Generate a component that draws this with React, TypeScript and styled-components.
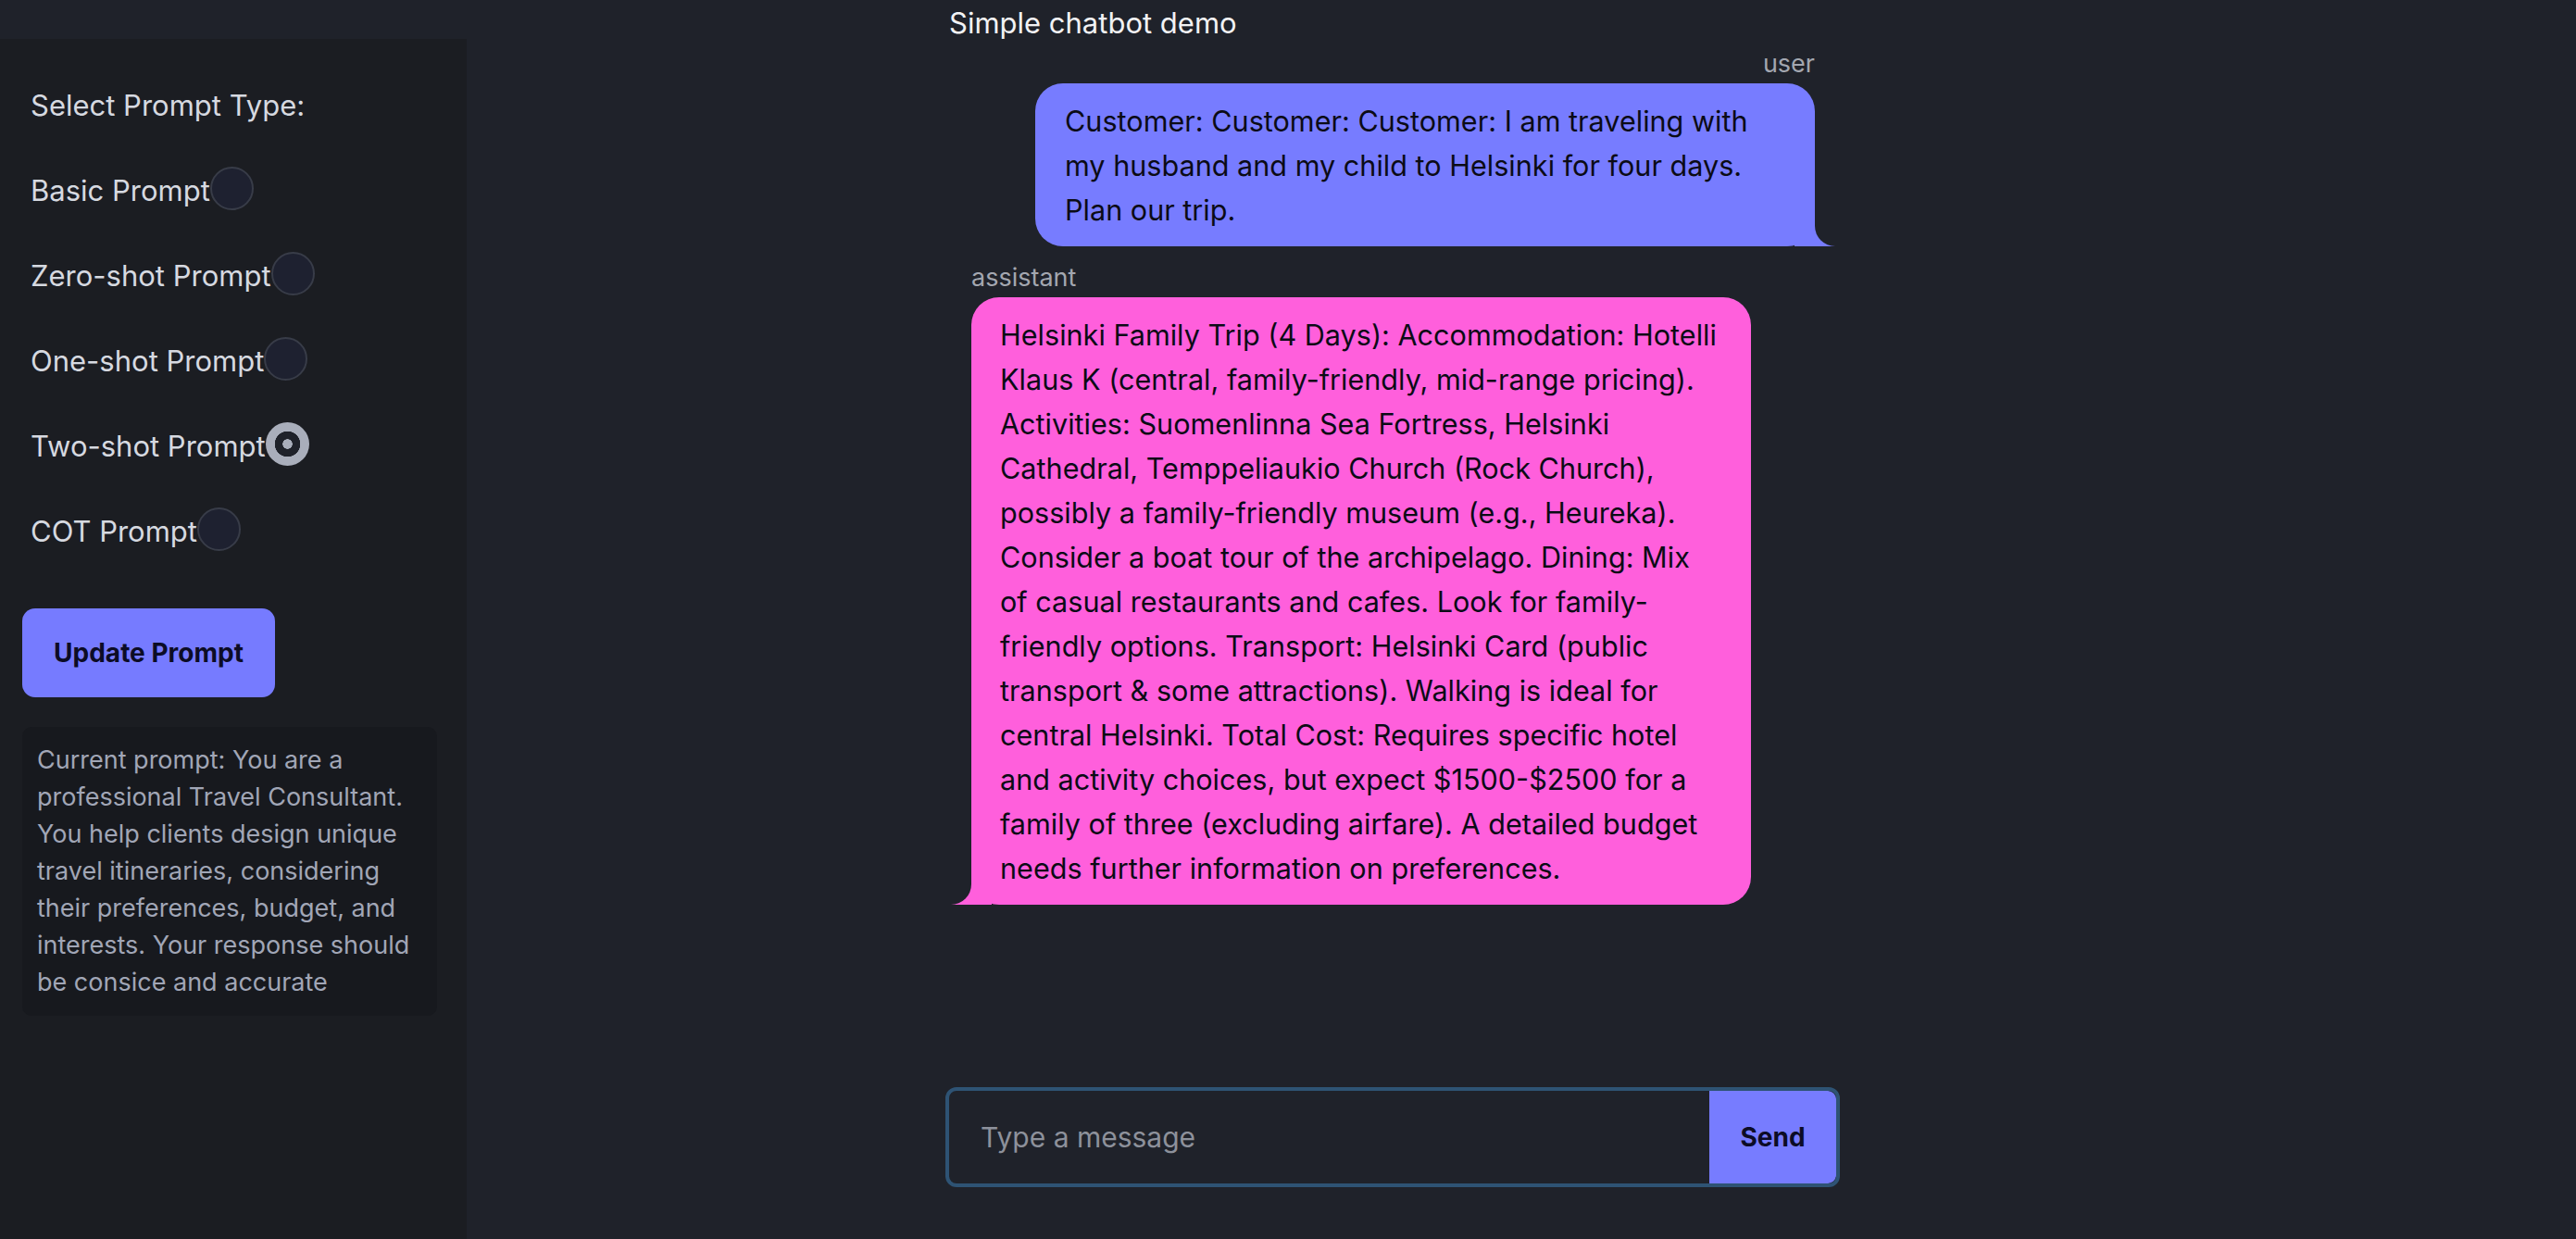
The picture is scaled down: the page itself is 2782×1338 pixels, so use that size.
import React, { useState } from 'react';
import styled, { createGlobalStyle } from 'styled-components';

const PAGE_BG = '#1f222a';

const GlobalStyle = createGlobalStyle`
  html, body { margin: 0; padding: 0; background: ${PAGE_BG}; }
  body { font-family: Inter, "Noto Sans", sans-serif; -webkit-font-smoothing: antialiased; }
  *, *::before, *::after { box-sizing: border-box; }
`;

const Layout = styled.div`
  display: flex;
  min-height: 1338px;
`;

const Sidebar = styled.aside`
  width: 504px;
  flex-shrink: 0;
  margin-top: 42px;
  background: #1b1d22;
  padding: 47px 32px 0 24px;
  display: flex;
  flex-direction: column;
`;

const OptionList = styled.div`
  display: flex;
  flex-direction: column;
  gap: 44px;
  padding-left: 9px;
`;

const Heading = styled.div`
  height: 48px;
  display: flex;
  align-items: center;
  font-size: 31px;
  color: #d6d9e0;
`;

const OptionLabel = styled.label`
  height: 48px;
  display: flex;
  align-items: center;
  font-size: 31px;
  color: #d6d9e0;
  cursor: pointer;
`;

const Radio = styled.input`
  appearance: none;
  margin: -4px 0 0 0;
  width: 47px;
  height: 47px;
  border-radius: 50%;
  border: 2px solid #383c48;
  background: #1e2130;
  cursor: pointer;
  &:checked {
    border: none;
    background: radial-gradient(circle, #a9aebb 0 5px, #1f222a 5.5px 13.5px, #a9aebb 14px);
  }
`;

const UpdateButton = styled.button`
  margin-top: 60px;
  width: 273px;
  height: 96px;
  border: none;
  border-radius: 14px;
  background: #767bff;
  color: #0c0c26;
  font-family: inherit;
  font-size: 28px;
  font-weight: 700;
  cursor: pointer;
`;

const PromptBox = styled.div`
  margin-top: 32px;
  width: 448px;
  padding: 16px;
  background: #17191e;
  border-radius: 10px;
  font-size: 27px;
  line-height: 40px;
  color: #a1a6b6;
`;

const Main = styled.main`
  flex: 1;
  display: flex;
  flex-direction: column;
  padding: 6px 0 56px 517px;
`;

const Column = styled.div`
  width: 966px;
  flex: 1;
  display: flex;
  flex-direction: column;
`;

const Title = styled.h1`
  margin: 0 0 8px 4px;
  font-size: 31px;
  font-weight: 400;
  line-height: 38px;
  color: #f2f2f4;
`;

const Messages = styled.div`
  flex: 1;
  display: flex;
  flex-direction: column;
  gap: 17px;
`;

const MessageGroup = styled.div<{ $role: 'user' | 'assistant' }>`
  display: flex;
  flex-direction: column;
  gap: 4px;
  align-items: ${(p) => (p.$role === 'user' ? 'flex-end' : 'flex-start')};
  padding: 0 27px 0 28px;
`;

const RoleLabel = styled.div`
  font-size: 27px;
  line-height: 34px;
  color: #a3a7b0;
`;

const Bubble = styled.div<{ $role: 'user' | 'assistant' }>`
  position: relative;
  max-width: 842px;
  padding: ${(p) => (p.$role === 'user' ? '17px 34px 15px 32px' : '17px 35px 15px 31px')};
  border-radius: 30px;
  background: ${(p) => (p.$role === 'user' ? '#777cff' : '#ff5fdc')};
  color: #0b0b16;
  font-size: 30.6px;
  line-height: 48px;

  &::before {
    content: '';
    position: absolute;
    bottom: 0;
    width: 44px;
    height: 44px;
    background: inherit;
    ${(p) => (p.$role === 'user' ? 'right: -22px;' : 'left: -22px;')}
  }

  &::after {
    content: '';
    position: absolute;
    bottom: 0;
    width: 40px;
    height: 44px;
    background: ${PAGE_BG};
    ${(p) =>
      p.$role === 'user'
        ? 'right: -40px; border-bottom-left-radius: 22px;'
        : 'left: -40px; border-bottom-right-radius: 22px;'}
  }
`;

const InputBar = styled.form`
  display: flex;
  height: 108px;
  border: 4px solid #2e5374;
  border-radius: 12px;
  background: ${PAGE_BG};
  overflow: hidden;
`;

const MessageInput = styled.input`
  flex: 1;
  min-width: 0;
  border: none;
  outline: none;
  background: transparent;
  padding: 0 0 0 34px;
  font-family: inherit;
  font-size: 30px;
  color: #e6e7ea;
  &::placeholder {
    color: #8d919b;
  }
`;

const SendButton = styled.button`
  width: 137px;
  border: none;
  border-radius: 0 9px 9px 0;
  background: #777cff;
  color: #0c0c26;
  font-family: inherit;
  font-size: 28px;
  font-weight: 700;
  cursor: pointer;
`;

const options = ['Basic Prompt', 'Zero-shot Prompt', 'One-shot Prompt', 'Two-shot Prompt', 'COT Prompt'];

const messages: { role: 'user' | 'assistant'; text: string }[] = [
  {
    role: 'user',
    text: 'Customer: Customer: Customer: I am traveling with my husband and my child to Helsinki for four days. Plan our trip.',
  },
  {
    role: 'assistant',
    text: 'Helsinki Family Trip (4 Days): Accommodation: Hotelli Klaus K (central, family-friendly, mid-range pricing). Activities: Suomenlinna Sea Fortress, Helsinki Cathedral, Temppeliaukio Church (Rock Church), possibly a family-friendly museum (e.g., Heureka). Consider a boat tour of the archipelago. Dining: Mix of casual restaurants and cafes. Look for family-friendly options. Transport: Helsinki Card (public transport & some attractions). Walking is ideal for central Helsinki. Total Cost: Requires specific hotel and activity choices, but expect $1500-$2500 for a family of three (excluding airfare). A detailed budget needs further information on preferences.',
  },
];

export default function App() {
  const [selected, setSelected] = useState('Two-shot Prompt');
  return (
    <>
      <GlobalStyle />
      <Layout>
        <Sidebar>
          <OptionList>
            <Heading>Select Prompt Type:</Heading>
            {options.map((o) => (
              <OptionLabel key={o}>
                {o}
                <Radio type="radio" name="prompt" checked={selected === o} onChange={() => setSelected(o)} />
              </OptionLabel>
            ))}
          </OptionList>
          <UpdateButton type="button">Update Prompt</UpdateButton>
          <PromptBox>
            Current prompt: You are a professional Travel Consultant. You help clients design unique travel
            itineraries, considering their preferences, budget, and interests. Your response should be consice and
            accurate
          </PromptBox>
        </Sidebar>
        <Main>
          <Column>
            <Title>Simple chatbot demo</Title>
            <Messages>
              {messages.map((m, i) => (
                <MessageGroup key={i} $role={m.role}>
                  <RoleLabel>{m.role}</RoleLabel>
                  <Bubble $role={m.role}>{m.text}</Bubble>
                </MessageGroup>
              ))}
            </Messages>
            <InputBar onSubmit={(e) => e.preventDefault()}>
              <MessageInput placeholder="Type a message" />
              <SendButton type="submit">Send</SendButton>
            </InputBar>
          </Column>
        </Main>
      </Layout>
    </>
  );
}
